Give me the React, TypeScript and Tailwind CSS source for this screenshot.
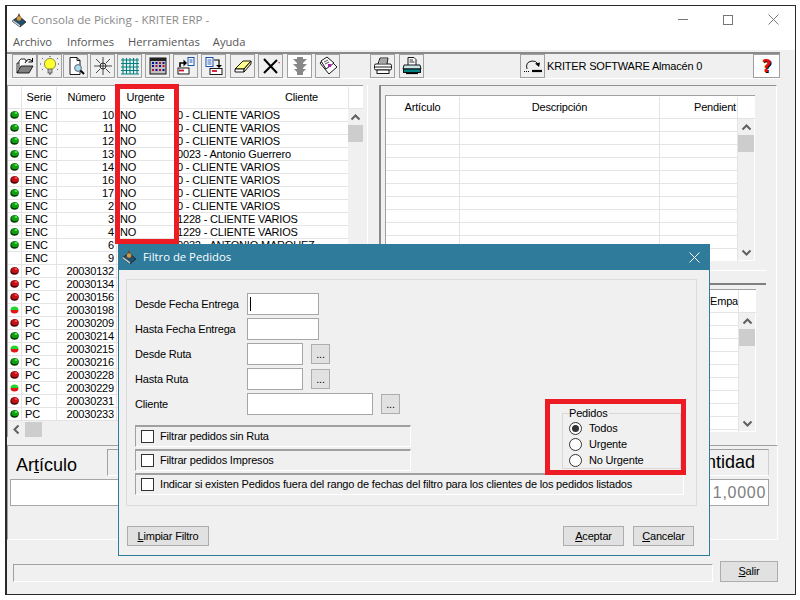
import React from "react";

const UI = "font-['Liberation_Sans',Arial,sans-serif]";

function AppIcon() {
  return (
    <svg width="16" height="16" viewBox="0 0 16 16" className="shrink-0">
      <path d="M1 9 L8 4 L15 10 L9 15 Z" fill="#1f4f6f" stroke="#222" strokeWidth="0.8" />
      <path d="M1 9 L9 15 L9 13 L2 8 Z" fill="#c9c9c9" />
      <path d="M5 8 L8 1 L11 8 Q8 10 5 8 Z" fill="#7a3b22" />
      <circle cx="8" cy="6.5" r="2.2" fill="#c9a04a" />
    </svg>
  );
}

function Dot({ k }: { k: string }) {
  if (k === "") return <span className="block w-[9px] h-[8px]" />;
  if (k === "m")
    return (
      <svg width="9" height="8" viewBox="0 0 9 8" className="block">
        <path d="M0.5 4 A4 3.6 0 0 1 8.5 4 Z" fill="#22d62c" />
        <path d="M0.5 4 L8.5 4 A4 3.6 0 0 1 0.5 4 Z" fill="#e01818" />
      </svg>
    );
  const main = k === "g" ? "#0fa00f" : "#c40f14";
  const dark = k === "g" ? "#063a06" : "#4a0508";
  const light = k === "g" ? "#5fe05f" : "#f05050";
  return (
    <svg width="9" height="8" viewBox="0 0 9 8" className="block">
      <ellipse cx="4.5" cy="4" rx="4.2" ry="3.8" fill={dark} />
      <ellipse cx="5" cy="3.2" rx="3.6" ry="2.9" fill={main} />
      <ellipse cx="6" cy="2" rx="1.4" ry="1" fill={light} />
    </svg>
  );
}

function Up() {
  return (
    <svg width="11" height="7" viewBox="0 0 11 7" className="block">
      <path d="M1.5 5.5 L5.5 1.5 L9.5 5.5" fill="none" stroke="#606060" strokeWidth="2" />
    </svg>
  );
}
function Down() {
  return (
    <svg width="11" height="7" viewBox="0 0 11 7" className="block">
      <path d="M1.5 1.5 L5.5 5.5 L9.5 1.5" fill="none" stroke="#606060" strokeWidth="2" />
    </svg>
  );
}

const icons: Record<string, React.ReactNode> = {
  folder: (
    <>
      <path d="M4 13 V5 L6 3 H10 L11 5 H12" fill="#fff" stroke="#000" strokeWidth="0.8" />
      <path d="M2 17 L6 10 H18 L14 17 Z" fill="#808080" stroke="#000" strokeWidth="0.8" />
      <path d="M2 17 V7 L4 7" fill="none" stroke="#000" strokeWidth="0.8" />
      <path d="M10 7 Q13 1 17 5 M17.5 2 V6 H13.5" fill="none" stroke="#000" strokeWidth="1" />
    </>
  ),
  bulb: (
    <>
      <circle cx="10" cy="8" r="5.6" fill="#ffff30" stroke="#77772a" strokeWidth="0.8" />
      <rect x="8" y="13" width="4" height="4" fill="#b8b8b8" stroke="#444" strokeWidth="0.7" />
      <path d="M9 18 H11" stroke="#333" />
      <path d="M10 0 V1.5 M2 2 L3.5 3.5 M18 2 L16.5 3.5 M0 8 H2 M18 8 H20 M2 14 L3.5 12.5 M18 14 L16.5 12.5" stroke="#333" strokeDasharray="1 1" />
    </>
  ),
  preview: (
    <>
      <path d="M4 1.5 H11 L14 4.5 V18.5 H4 Z" fill="#fff" stroke="#000" strokeWidth="0.9" />
      <path d="M11 1.5 V4.5 H14" fill="none" stroke="#000" strokeWidth="0.9" />
      <circle cx="12" cy="12" r="3.4" fill="#a8dcea" stroke="#556" strokeWidth="0.9" />
      <path d="M14.5 14.5 L18 18" stroke="#000" strokeWidth="1.8" />
    </>
  ),
  star: (
    <>
      <circle cx="10" cy="10" r="3" fill="none" stroke="#000" strokeWidth="0.8" />
      <path d="M10 1 V19 M1 10 H19" stroke="#000" strokeWidth="0.7" />
      <path d="M3 3 L7 7 M17 3 L13 7 M3 17 L7 13 M17 17 L13 13" stroke="#000" strokeWidth="0.7" />
    </>
  ),
  grid: (
    <path d="M3 2 V18 M6.5 2 V18 M10 2 V18 M13.5 2 V18 M17 2 V18 M1 4 H19 M1 7.5 H19 M1 11 H19 M1 14.5 H19 M1 18 H19" stroke="#008080" strokeWidth="1.1" />
  ),
  calendar: (
    <>
      <rect x="2" y="2" width="16" height="16" fill="#c0c0c0" stroke="#111" />
      <rect x="2" y="2" width="16" height="3" fill="#222" />
      <path d="M4 6 h2 v2 h-2z M7.5 6 h2 v2 h-2z M14.5 6 h2 v2 h-2z M4 9 h2 v2 h-2z M11 9 h2 v2 h-2z M14.5 13 h2 v2 h-2z M7.5 13 h2 v2 h-2z" fill="#00109a" />
      <path d="M11 6 h2 v2 h-2z M7.5 9 h2 v2 h-2z M14.5 9 h2 v2 h-2z M4 13 h2 v2 h-2z M11 13 h2 v2 h-2z" fill="#c01030" />
    </>
  ),
  arrDoc: (
    <>
      <rect x="12" y="1.5" width="6" height="8" fill="#fff" stroke="#0040a0" strokeWidth="0.9" />
      <path d="M13.5 4 H16.5 M13.5 6 H16.5" stroke="#0040a0" strokeWidth="0.9" />
      <rect x="2" y="12" width="11" height="6" fill="#fff" stroke="#000" strokeWidth="0.9" />
      <path d="M3 14.5 H8" stroke="#d01030" strokeWidth="1.8" />
      <path d="M4 11 V7 H8" fill="none" stroke="#000" strokeWidth="1.6" />
      <path d="M7.5 3.5 L11 7 L7.5 10.5 Z" fill="#000" />
    </>
  ),
  docArr: (
    <>
      <rect x="2" y="1.5" width="7" height="9" fill="#fff" stroke="#0040a0" strokeWidth="0.9" />
      <path d="M3.5 4 H7.5 M3.5 6 H7.5 M3.5 8 H7.5" stroke="#0040a0" strokeWidth="0.8" />
      <path d="M10 4 H15 V10" fill="none" stroke="#000" strokeWidth="1.2" />
      <path d="M12 9 H18 L15 12 Z" fill="#000" />
      <rect x="6" y="12.5" width="12" height="6" fill="#fff" stroke="#000" strokeWidth="0.9" />
      <path d="M8 15 H13" stroke="#d01030" strokeWidth="1.8" />
    </>
  ),
  eraser: (
    <>
      <path d="M2 13 L10 5 H18 L11 13 Z" fill="#ffff88" stroke="#000" strokeWidth="0.9" />
      <path d="M2 13 V16 H11 V13 Z" fill="#fff" stroke="#000" strokeWidth="0.9" />
      <path d="M11 13 V16 L18 8 V5 Z" fill="#e8e8b0" stroke="#000" strokeWidth="0.9" />
    </>
  ),
  del: (
    <>
      <path d="M3 3 L16 17 M16 4 L3 17" stroke="#000" strokeWidth="2" />
      <rect x="17.5" y="6" width="1.2" height="1.2" fill="#d01030" />
    </>
  ),
  traffic: (
    <>
      <path d="M7 1 H13 V3 H17 L13 7 V8 H17 L13 12 V13 H16 L13 16 V19 H7 V16 L4 13 H7 V12 L3 8 H7 V7 L3 3 H7 Z" fill="#888" />
    </>
  ),
  cards: (
    <>
      <path d="M2 7 L10 2 L19 11 L11 18 Z" fill="#fff" stroke="#000" strokeWidth="0.9" />
      <path d="M3 5 L9 1 L16 7 L8 13 Z" fill="#fff" stroke="#000" strokeWidth="0.9" />
      <path d="M6 6 L10 4 M7 8 L11 6" stroke="#000" strokeWidth="0.7" />
      <rect x="10" y="8" width="3" height="3" fill="#b020b0" />
    </>
  ),
  printer: (
    <>
      <path d="M5 8 L7 2 H15 L14 8" fill="#fff" stroke="#000" strokeWidth="0.9" />
      <path d="M7 4 H14 M6.5 6 H14" stroke="#000" strokeWidth="0.7" />
      <rect x="1.5" y="8" width="17" height="6" rx="1.5" fill="#fff" stroke="#000" strokeWidth="0.9" />
      <path d="M2 11 H18" stroke="#000" strokeWidth="0.9" />
      <rect x="4" y="14" width="12" height="3.5" fill="#fff" stroke="#000" strokeWidth="0.9" />
    </>
  ),
  printer2: (
    <>
      <path d="M6 9 V1.5 H12 L14 3.5 V9" fill="#fff" stroke="#000" strokeWidth="0.9" />
      <path d="M7.5 4 H11 M7.5 6 H12.5" stroke="#000" strokeWidth="0.8" />
      <path d="M2 9 H18 L19 13 H1 Z" fill="#c8e8e8" stroke="#000" strokeWidth="0.9" />
      <rect x="1.5" y="13" width="17" height="3.5" fill="#008080" stroke="#000" strokeWidth="0.9" />
      <path d="M4 17.5 H16" stroke="#000" strokeWidth="1.2" />
    </>
  ),
  refresh: (
    <>
      <path d="M4 13 Q2 6 9 5 Q13 4.5 15 8" fill="none" stroke="#000" strokeWidth="0.9" />
      <path d="M12 7.5 L17 6.5 L16 11 Z" fill="#000" />
      <path d="M9 15 H19" stroke="#000" strokeWidth="2.2" />
      <path d="M1 15.5 H7" stroke="#000" strokeDasharray="1 1" />
    </>
  ),
};

function TB({ ic, cls = "", white = false }: { ic: string; cls?: string; white?: boolean }) {
  return (
    <div className={`w-[25px] h-[24px] shrink-0 flex items-center justify-center border border-[#a0a0a0] ${white ? "bg-white" : "bg-[#f0f0f0]"} ${cls}`}>
      <svg width="20" height="20" viewBox="0 0 20 20">{icons[ic]}</svg>
    </div>
  );
}

const leftRows: [string, string, string, string][] = [
  ["g", "ENC", "10", "0 - CLIENTE VARIOS"],
  ["g", "ENC", "11", "0 - CLIENTE VARIOS"],
  ["g", "ENC", "12", "0 - CLIENTE VARIOS"],
  ["g", "ENC", "13", "0023 - Antonio Guerrero"],
  ["g", "ENC", "14", "0 - CLIENTE VARIOS"],
  ["r", "ENC", "16", "0 - CLIENTE VARIOS"],
  ["g", "ENC", "17", "0 - CLIENTE VARIOS"],
  ["g", "ENC", "2", "0 - CLIENTE VARIOS"],
  ["g", "ENC", "3", "1228 - CLIENTE VARIOS"],
  ["g", "ENC", "4", "1229 - CLIENTE VARIOS"],
  ["g", "ENC", "6", "0032 - ANTONIO MARQUEZ"],
  ["", "ENC", "9", ""],
  ["r", "PC", "20030132", ""],
  ["r", "PC", "20030134", ""],
  ["r", "PC", "20030156", ""],
  ["m", "PC", "20030198", ""],
  ["r", "PC", "20030209", ""],
  ["g", "PC", "20030214", ""],
  ["m", "PC", "20030215", ""],
  ["g", "PC", "20030216", ""],
  ["r", "PC", "20030228", ""],
  ["m", "PC", "20030229", ""],
  ["r", "PC", "20030231", ""],
  ["g", "PC", "20030233", ""],
];

function VScroll({ cls }: { cls: string }) {
  return (
    <div className={`bg-[#f0f0f0] flex flex-col items-center ${cls}`}>
      <div className="h-[16px] flex items-center justify-center"><Up /></div>
      <div className="w-full h-[17px] bg-[#cdcdcd]" />
      <div className="flex-1" />
      <div className="h-[16px] flex items-center justify-center"><Down /></div>
    </div>
  );
}

function Input({ w, caret = false }: { w: string; caret?: boolean }) {
  return (
    <div className={`h-[22px] bg-white border border-[#a6a6a6] flex items-center pl-[2px] ${w}`}>
      {caret && <span className="block w-[1px] h-[14px] bg-black" />}
    </div>
  );
}
function Dots({ cls = "" }: { cls?: string }) {
  return (
    <div className={`w-[19px] h-[20px] bg-[#e1e1e1] border border-[#adadad] flex items-center justify-center text-[11px] ${cls}`}>...</div>
  );
}
function Field({ label, w, caret, dots }: { label: string; w: string; caret?: boolean; dots?: boolean }) {
  return (
    <div className="flex items-center h-[22px]">
      <span className="w-[112px] shrink-0 text-[11px] whitespace-nowrap">{label}</span>
      <Input w={w} caret={caret} />
      {dots && <Dots cls="ml-[8px]" />}
    </div>
  );
}
function Check({ label, w }: { label: string; w: string }) {
  return (
    <div className={`h-[22px] flex items-center pl-[5px] pb-[1px] border-t-2 border-l border-t-[#a0a0a0] border-l-[#a0a0a0] border-b border-r border-b-white border-r-white ${w}`}>
      <span className="w-[13px] h-[13px] bg-white border border-[#333] shrink-0" />
      <span className="ml-[6px] text-[11px] whitespace-nowrap">{label}</span>
    </div>
  );
}
function Radio({ label, on }: { label: string; on?: boolean }) {
  return (
    <div className="h-[16px] flex items-center">
      <span className="w-[13px] h-[13px] rounded-full bg-white border border-[#333] flex items-center justify-center shrink-0">
        {on && <span className="block w-[7px] h-[7px] rounded-full bg-[#333]" />}
      </span>
      <span className="ml-[7px] text-[11px]">{label}</span>
    </div>
  );
}
function Btn({ children, w, cls = "" }: { children: React.ReactNode; w: string; cls?: string }) {
  return (
    <div className={`h-[20px] bg-[#e1e1e1] border border-[#adadad] flex items-center justify-center text-[11px] ${w} ${cls}`}>{children}</div>
  );
}

function RightRows({ n, cols }: { n: number; cols: string[] }) {
  return (
    <>
      {Array.from({ length: n }).map((_, i) => (
        <div key={i} className="h-[13px] flex border-b border-[#e4e4e4] bg-white">
          {cols.map((c, j) => (
            <div key={j} className={`h-full border-r border-[#e4e4e4] ${c}`} />
          ))}
        </div>
      ))}
    </>
  );
}

export default function App() {
  return (
    <div className={`relative w-[800px] h-[600px] overflow-hidden bg-white pt-[5px] pl-[5px] text-black tracking-[-0.18px] ${UI}`}>
      <div className="w-[791px] h-[590px] flex flex-col border-t border-r border-b border-l-2 border-[#2a2a2a] bg-white">
        {/* title */}
        <div className="h-[28px] shrink-0 flex items-center pl-[4px] pb-[1px] bg-white">
          <AppIcon />
          <span className="ml-[4px] text-[11.6px] text-[#8a8a8a] font-['Open_Sans',sans-serif] tracking-normal">Consola de Picking - KRITER ERP -</span>
          <div className="ml-auto flex items-center pr-[16px]">
            <span className="block w-[10px] h-[1px] bg-[#777]" />
            <span className="ml-[35px] block w-[10px] h-[10px] border border-[#777]" />
            <svg className="ml-[35px]" width="11" height="11" viewBox="0 0 11 11"><path d="M0.5 0.5 L10.5 10.5 M10.5 0.5 L0.5 10.5" stroke="#777" /></svg>
          </div>
        </div>
        {/* menu */}
        <div className="h-[16px] shrink-0 flex items-center pl-[6px] text-[11.2px] text-[#555] bg-white font-['Open_Sans',sans-serif] tracking-normal">
          <span>Archivo</span>
          <span className="ml-[15px]">Informes</span>
          <span className="ml-[14px]">Herramientas</span>
          <span className="ml-[13px]">Ayuda</span>
        </div>
        {/* body */}
        <div className="flex-1 bg-[#f0f0f0] flex flex-col">
          {/* toolbar */}
          <div className="mt-[2px] w-[773px] h-[27px] shrink-0 border-t-2 border-t-[#8a8a8a] border-b border-b-white flex items-center pl-[5px]">
            <TB ic="folder" />
            <TB ic="bulb" />
            <TB ic="preview" cls="ml-[1px]" />
            <TB ic="star" cls="ml-[2px]" />
            <TB ic="grid" cls="ml-[2px]" />
            <TB ic="calendar" cls="ml-[3px]" />
            <TB ic="arrDoc" cls="ml-[3px]" />
            <TB ic="docArr" cls="ml-[3px]" />
            <TB ic="eraser" cls="ml-[4px]" />
            <TB ic="del" cls="ml-[3px]" />
            <TB ic="traffic" cls="ml-[4px]" white />
            <TB ic="cards" cls="ml-[3px]" />
            <TB ic="printer" cls="ml-[30px]" />
            <TB ic="printer2" cls="ml-[4px]" />
            <TB ic="refresh" cls="ml-[96px]" />
            <span className="ml-[2px] text-[11px] w-[206px] whitespace-nowrap">KRITER SOFTWARE Almacén 0</span>
            <div className="w-[27px] h-[24px] bg-white border border-[#a0a0a0] flex items-center justify-center text-[17px] leading-none font-bold text-[#e01010] [text-shadow:1px_1px_0_#000] font-['DejaVu_Sans',sans-serif]">?</div>
          </div>

          {/* main */}
          <div className="mt-[6px] h-[360px] shrink-0 flex">
            {/* left */}
            <div className="w-[361px] h-full border-r border-white">
              <div className="w-[356px] border-t border-l border-[#a0a0a0] text-[11px]">
                <div className="flex h-[23px] pt-[1px] bg-white border-b border-[#e4e4e4]">
                  <div className="w-[14px] border-r border-[#e4e4e4]" />
                  <div className="w-[35px] border-r border-[#e4e4e4] flex items-center justify-center">Serie</div>
                  <div className="w-[60px] border-r border-[#e4e4e4] flex items-center justify-center">Número</div>
                  <div className="w-[57px] flex items-center justify-center">Urgente</div>
                  <div className="w-[174px] flex items-center pl-[111px]">Cliente</div>
                  <div className="w-[15px] border-l border-[#e4e4e4]" />
                </div>
                <div className="flex">
                  <div className="w-[340px]">
                    {leftRows.map((r) => (
                      <div key={r[2]} className="h-[13px] flex bg-white border-b border-[#e4e4e4] leading-[13px]">
                        <div className="w-[14px] border-r border-[#e4e4e4] flex items-center justify-center"><Dot k={r[0]} /></div>
                        <div className="w-[35px] border-r border-[#e4e4e4] pl-[3px]">{r[1]}</div>
                        <div className="w-[60px] border-r border-[#e4e4e4] text-right pr-[2px]">{r[2]}</div>
                        <div className="w-[57px] pl-[3px]">NO</div>
                        <div className="flex-1 pl-[3px] whitespace-nowrap overflow-hidden">{r[3]}</div>
                      </div>
                    ))}
                  </div>
                  <VScroll cls="w-[15px]" />
                </div>
                <div className="h-[16px] flex items-center">
                  <div className="pl-[5px] w-[17px] flex items-center">
                    <svg width="7" height="11" viewBox="0 0 7 11" className="block"><path d="M5.5 1.5 L1.5 5.5 L5.5 9.5" fill="none" stroke="#606060" strokeWidth="2" /></svg>
                  </div>
                  <div className="w-[17px] h-[15px] bg-[#cdcdcd]" />
                </div>
              </div>
            </div>

            {/* right */}
            <div className="ml-[11px] w-[398px] h-full border-t border-t-[#8f8f8f] border-l-2 border-l-[#8a8a8a] border-r border-r-white pt-[9px] pl-[4px] text-[11px]">
              <div className="w-[370px] h-[166px] border-t border-l border-[#a0a0a0] overflow-hidden">
                <div className="flex h-[23px] pt-[1px] bg-white border-b border-[#e4e4e4]">
                  <div className="w-[74px] border-r border-[#e4e4e4] flex items-center justify-center">Artículo</div>
                  <div className="w-[200px] border-r border-[#e4e4e4] flex items-center justify-center">Descripción</div>
                  <div className="w-[78px] border-r border-[#e4e4e4] flex items-center justify-end pr-[1px]">Pendient</div>
                  <div className="w-[16px]" />
                </div>
                <div className="flex h-[142px]">
                  <div className="w-[352px]">
                    <RightRows n={11} cols={["w-[74px]", "w-[200px]", "w-[78px]"]} />
                  </div>
                  <VScroll cls="w-[17px] h-[142px] border-r border-b border-white" />
                </div>
              </div>
              <div className="mt-[9px] w-[381px] border-b border-white" />
              <div className="mt-[12px] w-[381px] border-t-2 border-[#808080]" />
              <div className="mt-[4px] w-[371px] h-[143px] border-t border-l border-[#a0a0a0] overflow-hidden">
                <div className="flex h-[23px] bg-white border-b border-[#e4e4e4]">
                  <div className="w-[323px] border-r border-[#e4e4e4]" />
                  <div className="w-[30px] border-r border-[#e4e4e4] flex items-center pl-[1px] overflow-hidden whitespace-nowrap">Empa</div>
                  <div className="w-[17px]" />
                </div>
                <div className="flex h-[119px]">
                  <div className="w-[353px] overflow-hidden">
                    <RightRows n={10} cols={["w-[323px]", "w-[30px]"]} />
                  </div>
                  <VScroll cls="w-[17px] border-r border-b border-white" />
                </div>
              </div>
            </div>
          </div>

          {/* bottom panel */}
          <div className="w-[771px] h-[95px] shrink-0 border-t border-l border-[#a0a0a0] border-r-white border-b-white border-r border-b pt-[3px] tracking-normal">
            <div className="flex h-[30px]">
              <span className="ml-[8px] w-[91px] text-[18px] leading-[30px] pt-[1px]">Ar<span className="underline">t</span>ículo</span>
              <div className="w-[662px] h-[27px] border-t border-l border-[#a0a0a0] border-b border-b-white border-r border-r-[#cfcfcf] flex items-center justify-end pr-[13px] text-[18px]">Cantidad</div>
            </div>
            <div className="ml-[2px] flex">
              <div className="w-[390px] h-[27px] bg-white border border-[#a6a6a6]" />
              <div className="w-[369px] h-[27px] bg-white border border-[#a6a6a6] flex items-center justify-end pr-[2px] text-[16px] text-[#808080] tracking-[0.7px]">1,0000</div>
            </div>
          </div>

          {/* status */}
          <div className="mt-[21px] flex items-start">
            <div className="mt-[3px] ml-[6px] w-[700px] h-[18px] border-t border-l border-[#a0a0a0] border-b border-r border-b-white border-r-white" />
            <Btn w="w-[58px]" cls="ml-[7px] !h-[21px]"><span><span className="underline">S</span>alir</span></Btn>
          </div>
        </div>
      </div>

      {/* red annotation over the grid */}
      <div className="absolute left-[115px] top-[84px] w-[64px] h-[160px] border-[5px] border-[#ed1c24]" />

      {/* dialog */}
      <div className="absolute left-[118px] top-[244px] w-[592px] h-[312px] bg-[#f0f0f0] border border-[#2e7b9c] flex flex-col">
        <div className="h-[26px] -mt-[1px] shrink-0 bg-[#2e7b9c] flex items-center pl-[2px]">
          <AppIcon />
          <span className="ml-[6px] text-[11.3px] text-white font-['Open_Sans',sans-serif] tracking-normal">Filtro de Pedidos</span>
          <svg className="ml-auto mr-[9px]" width="11" height="11" viewBox="0 0 11 11"><path d="M0.5 0.5 L10.5 10.5 M10.5 0.5 L0.5 10.5" stroke="#fff" /></svg>
        </div>
        <div className="mt-[9px] ml-[7px] w-[571px] h-[227px] shrink-0 border border-[#dcdcdc] pt-[13px] pl-[8px]">
          <div className="flex">
            <div className="w-[276px] flex flex-col">
              <div className="flex flex-col gap-[3px]">
                <Field label="Desde Fecha Entrega" w="w-[72px]" caret />
                <Field label="Hasta Fecha Entrega" w="w-[72px]" />
                <Field label="Desde Ruta" w="w-[56px]" dots />
                <Field label="Hasta Ruta" w="w-[56px]" dots />
                <Field label="Cliente" w="w-[126px]" dots />
              </div>
              <div className="mt-[10px] flex flex-col gap-[2px]">
                <Check label="Filtrar pedidos sin Ruta" w="w-[276px]" />
                <Check label="Filtrar pedidos Impresos" w="w-[276px]" />
              </div>
            </div>
            <fieldset className="self-end ml-[151px] mb-[2px] w-[119px] border border-[#d8d8d8] pl-[6px] leading-none">
              <legend className="text-[11px] leading-[14px] bg-[#f0f0f0] pr-[1px]">Pedidos</legend>
              <Radio label="Todos" on />
              <Radio label="Urgente" />
              <Radio label="No Urgente" />
            </fieldset>
          </div>
          <div className="mt-[2px]">
            <Check label="Indicar si existen Pedidos fuera del rango de fechas del filtro para los clientes de los pedidos listados" w="w-[549px]" />
          </div>
        </div>
        <div className="mt-[20px] ml-[8px] flex">
          <Btn w="w-[82px]"><span><span className="underline">L</span>impiar Filtro</span></Btn>
          <Btn w="w-[61px]" cls="ml-[354px]"><span><span className="underline">A</span>ceptar</span></Btn>
          <Btn w="w-[61px]" cls="ml-[9px]"><span><span className="underline">C</span>ancelar</span></Btn>
        </div>
      </div>

      {/* red annotation over the dialog */}
      <div className="absolute left-[545px] top-[399px] w-[141px] h-[76px] border-[5px] border-[#ed1c24]" />
    </div>
  );
}
